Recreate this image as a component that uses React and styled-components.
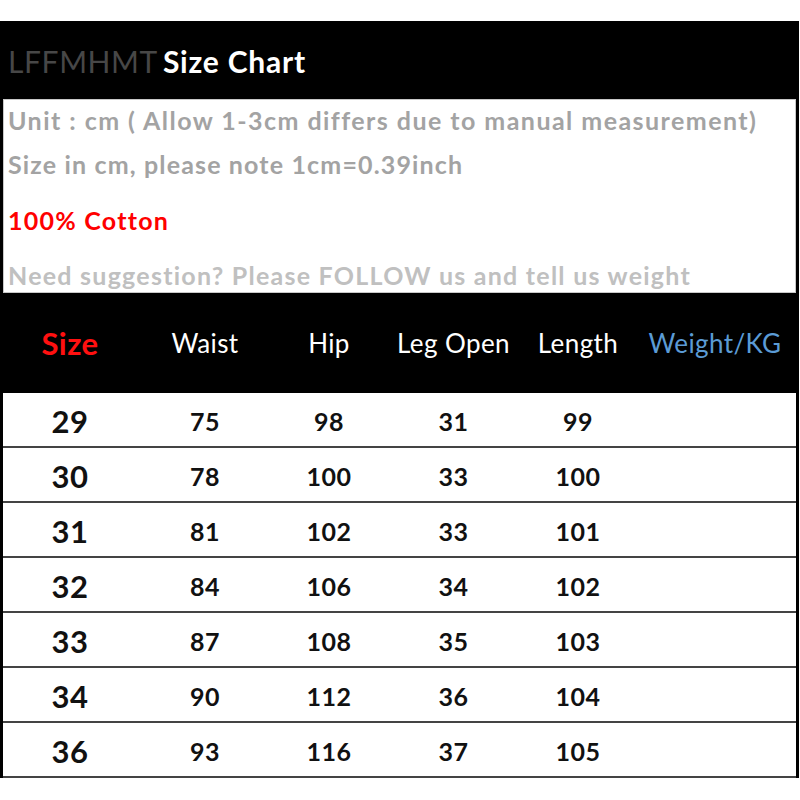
import React from 'react';
import styled, { createGlobalStyle } from 'styled-components';

const GlobalStyle = createGlobalStyle`
  body {
    margin: 0;
    background: #fff;
    font-family: Lato, "Open Sans", sans-serif;
  }
`;

const Chart = styled.div`
  margin-top: 21px;
  width: 793px;
  border-left: 3px solid #000;
  border-right: 3px solid #000;
`;

const TitleBar = styled.div`
  height: 78px;
  background: #000;
  display: flex;
  align-items: center;
  gap: 5px;
  padding-left: 5px;
  padding-top: 1px;
  box-sizing: border-box;
  font-size: 30px;
`;

const Brand = styled.span`
  color: #474747;
  font-weight: 400;
  letter-spacing: 0.6px;
`;

const TitleText = styled.span`
  color: #fff;
  font-weight: 700;
  letter-spacing: 0.8px;
`;

const Info = styled.div`
  height: 194px;
  box-sizing: border-box;
  border: 1px solid #c8c8c8;
  background: #fff;
  overflow: hidden;
  padding-left: 4px;
`;

const InfoLine = styled.div`
  margin-top: ${p => p.top}px;
  height: 30px;
  line-height: 30px;
  font-size: 25px;
  font-weight: 700;
  letter-spacing: ${p => p.ls || 1.25}px;
  color: ${p => p.color};
  white-space: nowrap;
`;

const cols = '134px 136px 112px 137px 112px 1fr';

const HeaderRow = styled.div`
  height: 100px;
  background: #000;
  display: grid;
  grid-template-columns: ${cols};
  align-items: center;
  text-align: center;
`;

const HeadCell = styled.div`
  color: ${p => p.color || '#fff'};
  font-size: ${p => (p.big ? 31 : 26)}px;
  font-weight: ${p => (p.big ? 700 : 400)};
  letter-spacing: 0.4px;
  white-space: nowrap;
`;

const Row = styled.div`
  height: 55px;
  box-sizing: border-box;
  border-bottom: 2px solid #444;
  display: grid;
  grid-template-columns: ${cols};
  align-items: center;
  text-align: center;
  background: #fff;
`;

const Cell = styled.div`
  color: #111;
  font-weight: 700;
  font-size: ${p => (p.big ? 31 : 25)}px;
  letter-spacing: 0.5px;
  padding-top: 2px;
`;

const rows = [
  ['29', '75', '98', '31', '99'],
  ['30', '78', '100', '33', '100'],
  ['31', '81', '102', '33', '101'],
  ['32', '84', '106', '34', '102'],
  ['33', '87', '108', '35', '103'],
  ['34', '90', '112', '36', '104'],
  ['36', '93', '116', '37', '105'],
];

export default function App() {
  return (
    <>
      <GlobalStyle />
      <Chart>
        <TitleBar>
          <Brand>LFFMHMT</Brand>
          <TitleText>Size Chart</TitleText>
        </TitleBar>
        <Info>
          <InfoLine top={5} ls={1.45} color="#a3a3a3">Unit : cm ( Allow 1-3cm differs due to manual measurement)</InfoLine>
          <InfoLine top={14} ls={1.15} color="#a3a3a3">Size in cm, please note 1cm=0.39inch</InfoLine>
          <InfoLine top={26} color="#ff0000">100% Cotton</InfoLine>
          <InfoLine top={25} color="#c0c0c0">Need suggestion? Please FOLLOW us and tell us weight</InfoLine>
        </Info>
        <HeaderRow>
          <HeadCell big color="#ff1010">Size</HeadCell>
          <HeadCell>Waist</HeadCell>
          <HeadCell>Hip</HeadCell>
          <HeadCell>Leg Open</HeadCell>
          <HeadCell>Length</HeadCell>
          <HeadCell color="#5b9bd5">Weight/KG</HeadCell>
        </HeaderRow>
        {rows.map(r => (
          <Row key={r[0]}>
            <Cell big>{r[0]}</Cell>
            <Cell>{r[1]}</Cell>
            <Cell>{r[2]}</Cell>
            <Cell>{r[3]}</Cell>
            <Cell>{r[4]}</Cell>
            <Cell />
          </Row>
        ))}
      </Chart>
    </>
  );
}
